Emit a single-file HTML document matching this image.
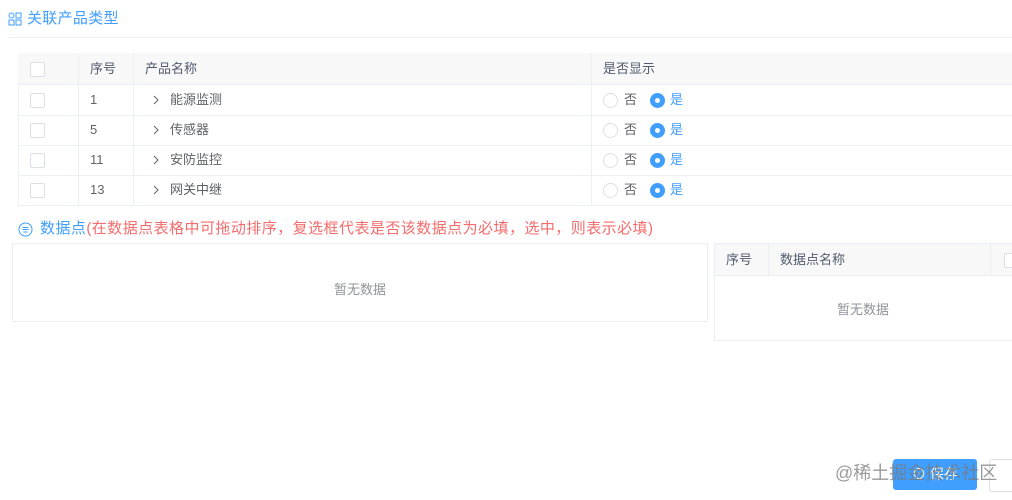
<!DOCTYPE html>
<html><head><meta charset="utf-8"><style>
body{margin:0;width:1012px;height:500px;background:#fff;font-family:"Liberation Sans","Noto Sans CJK SC",sans-serif;font-size:13px;color:#606266;position:relative;overflow:hidden}
.abs{position:absolute}
.cb{position:absolute;width:13px;height:13px;border:1px solid #dcdfe6;border-radius:2px;background:#fff}
.row{position:absolute;left:18px;width:994px;height:30px;border-bottom:1px solid #ebeef5}
.t{position:absolute;top:0;line-height:30px;white-space:nowrap}
.r0{position:absolute;width:13px;height:13px;border:1px solid #dcdfe6;border-radius:50%;top:8px}
.r1{position:absolute;width:15px;height:15px;background:#409eff;border-radius:50%;top:8px}
.r1:after{content:"";position:absolute;left:5px;top:5px;width:5px;height:5px;background:#fff;border-radius:50%}
.chev{position:absolute;left:135px;top:10px}
</style></head><body>
<svg class="abs" style="left:8px;top:12px" width="14" height="14" viewBox="0 0 14 14" fill="none" stroke="#409eff" stroke-width="1"><circle cx="3.5" cy="3.5" r="2.5"/><rect x="8" y="1" width="5" height="5"/><rect x="1" y="8" width="5" height="5"/><rect x="8" y="8" width="5" height="5"/></svg>
<div class="abs" style="left:27px;top:9px;font-size:15px;color:#409eff;line-height:20px;letter-spacing:0.3px">关联产品类型</div>
<div class="abs" style="left:8px;top:37px;width:1004px;height:1px;background:#ebeef5"></div>

<div class="abs" style="left:18px;top:53px;width:994px;height:152px;border-left:1px solid #ebeef5"></div>
<div class="row" style="top:53px;height:31px;background:#f8f8f9;color:#515a6e">
<div class="cb" style="left:12px;top:9px"></div>
<div class="t" style="left:72px;line-height:31px">序号</div>
<div class="t" style="left:127px;line-height:31px">产品名称</div>
<div class="t" style="left:585px;line-height:31px">是否显示</div>
<div class="abs" style="left:60px;top:0;width:1px;height:152px;background:#ebeef5"></div>
<div class="abs" style="left:115px;top:0;width:1px;height:152px;background:#ebeef5"></div>
<div class="abs" style="left:573px;top:0;width:1px;height:152px;background:#ebeef5"></div>
</div>
<div class="row" style="top:85px"><div class="cb" style="left:12px;top:8px"></div><div class="t" style="left:72px">1</div><svg class="chev" width="6" height="10" viewBox="0 0 6 10"><path d="M1 1l4 4-4 4" fill="none" stroke="#606266" stroke-width="1"/></svg><div class="t" style="left:152px">能源监测</div><div class="r0" style="left:585px"></div><div class="t" style="left:606px">否</div><div class="r1" style="left:632px"></div><div class="t" style="left:652px;color:#409eff">是</div></div>
<div class="row" style="top:115px"><div class="cb" style="left:12px;top:8px"></div><div class="t" style="left:72px">5</div><svg class="chev" width="6" height="10" viewBox="0 0 6 10"><path d="M1 1l4 4-4 4" fill="none" stroke="#606266" stroke-width="1"/></svg><div class="t" style="left:152px">传感器</div><div class="r0" style="left:585px"></div><div class="t" style="left:606px">否</div><div class="r1" style="left:632px"></div><div class="t" style="left:652px;color:#409eff">是</div></div>
<div class="row" style="top:145px"><div class="cb" style="left:12px;top:8px"></div><div class="t" style="left:72px">11</div><svg class="chev" width="6" height="10" viewBox="0 0 6 10"><path d="M1 1l4 4-4 4" fill="none" stroke="#606266" stroke-width="1"/></svg><div class="t" style="left:152px">安防监控</div><div class="r0" style="left:585px"></div><div class="t" style="left:606px">否</div><div class="r1" style="left:632px"></div><div class="t" style="left:652px;color:#409eff">是</div></div>
<div class="row" style="top:175px"><div class="cb" style="left:12px;top:8px"></div><div class="t" style="left:72px">13</div><svg class="chev" width="6" height="10" viewBox="0 0 6 10"><path d="M1 1l4 4-4 4" fill="none" stroke="#606266" stroke-width="1"/></svg><div class="t" style="left:152px">网关中继</div><div class="r0" style="left:585px"></div><div class="t" style="left:606px">否</div><div class="r1" style="left:632px"></div><div class="t" style="left:652px;color:#409eff">是</div></div>

<svg class="abs" style="left:18px;top:222px" width="15" height="15" viewBox="0 0 15 15" fill="none" stroke="#409eff" stroke-width="1"><circle cx="7.5" cy="7.5" r="6.5"/><path d="M4.5 5.5h6M4.5 7.5h6M5.5 10h4"/></svg>
<div class="abs" style="left:40px;top:219px;font-size:15px;line-height:20px;white-space:nowrap;letter-spacing:0.45px"><span style="color:#409eff">数据点</span><span style="color:#f56c6c">(在数据点表格中可拖动排序，复选框代表是否该数据点为必填，选中，则表示必填)</span></div>

<div class="abs" style="left:12px;top:243px;width:694px;height:77px;border:1px solid #ebeef5"></div>
<div class="abs" style="left:12px;top:279px;width:696px;text-align:center;color:#909399">暂无数据</div>

<div class="abs" style="left:714px;top:243px;width:298px;height:96px;border:1px solid #ebeef5;border-right:none"></div>
<div class="abs" style="left:715px;top:244px;width:297px;height:31px;background:#f8f8f9;border-bottom:1px solid #ebeef5;color:#515a6e">
<div class="t" style="left:11px;line-height:31px">序号</div>
<div class="abs" style="left:53px;top:0;width:1px;height:31px;background:#ebeef5"></div>
<div class="t" style="left:65px;line-height:31px">数据点名称</div>
<div class="abs" style="left:275px;top:0;width:1px;height:31px;background:#ebeef5"></div>
<div class="cb" style="left:289px;top:9px"></div>
</div>
<div class="abs" style="left:714px;top:299px;width:298px;text-align:center;color:#909399">暂无数据</div>

<div class="abs" style="left:893px;top:459px;width:84px;height:31px;background:#409eff;border-radius:3px;color:#fff;line-height:31px;text-align:center;font-size:14px">⊙ 保存</div>
<div class="abs" style="left:989px;top:459px;width:30px;height:31px;border:1px solid #dcdfe6;border-radius:3px"></div>
<div class="abs" style="left:835px;top:462px;font-size:18px;line-height:22px;color:rgba(120,120,120,0.75);white-space:nowrap">@稀土掘金技术社区</div>
</body></html>
